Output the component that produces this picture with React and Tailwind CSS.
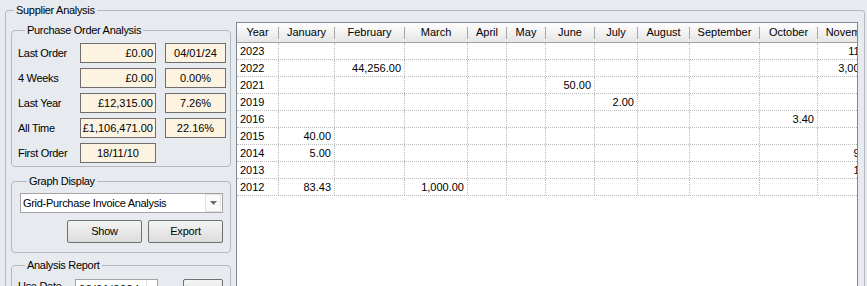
import React from "react";

const cols = [
  { name: "Year", w: "w-[42px]" },
  { name: "January", w: "w-[56px]" },
  { name: "February", w: "w-[70px]" },
  { name: "March", w: "w-[63px]" },
  { name: "April", w: "w-[39px]" },
  { name: "May", w: "w-[39px]" },
  { name: "June", w: "w-[49px]" },
  { name: "July", w: "w-[43px]" },
  { name: "August", w: "w-[52px]" },
  { name: "September", w: "w-[70px]" },
  { name: "October", w: "w-[58px]" },
  { name: "November", w: "w-[67px]" },
  { name: "December", w: "w-[67px]" },
];

const rows = [
  { year: "2023", v: { 11: "118.00" } },
  { year: "2022", v: { 2: "44,256.00", 11: "3,000.00" } },
  { year: "2021", v: { 6: "50.00" } },
  { year: "2019", v: { 7: "2.00" } },
  { year: "2016", v: { 10: "3.40" } },
  { year: "2015", v: { 1: "40.00" } },
  { year: "2014", v: { 1: "5.00", 11: "95.00" } },
  { year: "2013", v: { 11: "15.00" } },
  { year: "2012", v: { 1: "83.43", 3: "1,000.00" } },
];

const poRows = [
  { label: "Last Order", a: "£0.00", b: "04/01/24" },
  { label: "4 Weeks", a: "£0.00", b: "0.00%" },
  { label: "Last Year", a: "£12,315.00", b: "7.26%" },
  { label: "All Time", a: "£1,106,471.00", b: "22.16%" },
];

function Arrow() {
  return (
    <svg width="7" height="4" viewBox="0 0 7 4">
      <path d="M0 0 L7 0 L3.5 4 Z" fill="#6b6b6b" />
    </svg>
  );
}

function Btn({ children, w }) {
  return (
    <div
      className={`${w} h-[23px] flex items-center justify-center border border-[#707070] rounded-[2px] bg-gradient-to-b from-[#f4f4f4] to-[#dcdcdc] tracking-[-0.2px]`}
    >
      {children}
    </div>
  );
}

export default function App() {
  return (
    <div className="w-[867px] h-[286px] overflow-hidden bg-[#e7eaee] text-[11px] leading-[13px] text-black font-['Liberation_Sans',Arial,sans-serif] pt-[4px] pl-[5px] pr-[2px]">
      <fieldset className="border border-[#b4b9c0] rounded-[3px] h-[400px]">
        <legend className="ml-[8px] px-[2px] tracking-[-0.3px]">Supplier Analysis</legend>
        <div className="flex gap-[5px] pl-[5px] pr-[6px] pt-[5px]">
          {/* Left column */}
          <div className="w-[220px] flex flex-col mt-[2px]">
            <fieldset className="border border-[#b4b9c0] rounded-[4px] pl-[6px] pt-[6px] pb-[3px]">
              <legend className="ml-[7px] px-[2px] tracking-[-0.3px]">Purchase Order Analysis</legend>
              <div className="flex flex-col gap-[5px]">
                {poRows.map((r) => (
                  <div key={r.label} className="flex items-center h-[20px]">
                    <div className="w-[62px] tracking-[-0.3px]">{r.label}</div>
                    <div className="w-[76px] h-[20px] border border-[#6e6e6e] bg-[#fdf3e1] text-right pr-[2px] leading-[18px]">
                      {r.a}
                    </div>
                    <div className="ml-[9px] w-[61px] h-[20px] border border-[#6e6e6e] bg-[#fdf3e1] text-center leading-[18px]">
                      {r.b}
                    </div>
                  </div>
                ))}
                <div className="flex items-center h-[20px]">
                  <div className="w-[62px] tracking-[-0.3px]">First Order</div>
                  <div className="w-[76px] h-[20px] border border-[#6e6e6e] bg-[#fdf3e1] text-center leading-[18px]">
                    18/11/10
                  </div>
                </div>
              </div>
            </fieldset>

            <fieldset className="mt-[8px] border border-[#b4b9c0] rounded-[4px] pl-[8px] pr-[7px] pt-[5px] pb-[9px]">
              <legend className="ml-[7px] px-[2px] tracking-[-0.3px]">Graph Display</legend>
              <div className="h-[20px] w-[203px] flex items-center border border-[#a3a3a3] bg-white">
                <div className="flex-1 pl-[2px] tracking-[-0.3px]">Grid-Purchase Invoice Analysis</div>
                <div className="w-[16px] h-[18px] mr-px flex items-center justify-center border border-[#e2e2e2] bg-[#fafafa]">
                  <Arrow />
                </div>
              </div>
              <div className="flex justify-end gap-[6px] mt-[7px]">
                <Btn w="w-[75px]">Show</Btn>
                <Btn w="w-[75px]">Export</Btn>
              </div>
            </fieldset>

            <fieldset className="mt-[6px] h-[80px] border border-[#b4b9c0] rounded-[4px] pl-[6px] pr-[7px] pt-[7px]">
              <legend className="ml-[7px] px-[2px] tracking-[-0.3px]">Analysis Report</legend>
              <div className="flex items-start">
                <div className="w-[57px] pt-[1px] tracking-[-0.3px]">Use Date</div>
                <div className="w-[83px] h-[21px] flex items-center border border-[#a3a3a3] bg-white">
                  <div className="flex-1 pl-[3px] tracking-[0.6px]">08/01/2024</div>
                  <div className="w-[11px] h-[19px] flex items-center justify-center border-l border-[#e2e2e2]">
                    <Arrow />
                  </div>
                </div>
                <div className="ml-auto">
                  <Btn w="w-[40px]">Print</Btn>
                </div>
              </div>
            </fieldset>
          </div>

          {/* Grid */}
          <div className="w-[622px] h-[300px] border border-[#828790] bg-white overflow-hidden">
            <div className="flex h-[20px] border-b border-[#a0a0a0] bg-gradient-to-b from-[#ffffff] to-[#e6e6e6]">
              {cols.map((c) => (
                <div key={c.name} className={`${c.w} shrink-0 flex items-center`}>
                  <div className="flex-1 text-center whitespace-nowrap overflow-hidden">{c.name}</div>
                  <div className="w-px h-[12px] bg-[#a8a8a8]" />
                </div>
              ))}
            </div>
            {rows.map((r) => (
              <div key={r.year} className="flex h-[17px] border-b border-dotted border-[#bdbdbd]">
                {cols.map((c, i) => (
                  <div
                    key={c.name}
                    className={`${c.w} shrink-0 border-r border-dotted border-[#bdbdbd] leading-[17px] whitespace-nowrap overflow-hidden ${
                      i === 0 ? "text-left pl-[3px]" : "text-right pr-[3px]"
                    }`}
                  >
                    {i === 0 ? r.year : r.v[i] || ""}
                  </div>
                ))}
              </div>
            ))}
          </div>
        </div>
      </fieldset>
    </div>
  );
}
